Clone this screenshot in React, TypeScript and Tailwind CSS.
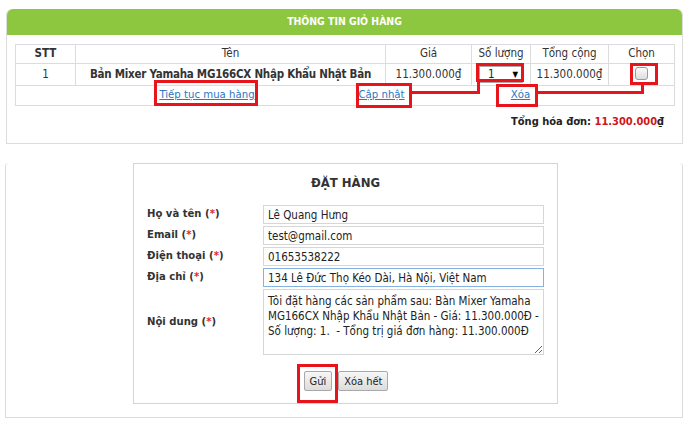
import { type ReactNode } from "react";

const fields = [
  { label: "Họ và tên", value: "Lê Quang Hưng" },
  { label: "Email", value: "test@gmail.com" },
  { label: "Điện thoại", value: "01653538222" },
  { label: "Địa chỉ", value: "134 Lê Đức Thọ Kéo Dài, Hà Nội, Việt Nam", focused: true },
];

const message =
  "Tôi đặt hàng các sản phẩm sau: Bàn Mixer Yamaha\nMG166CX Nhập Khẩu Nhật Bản - Giá: 11.300.000Đ -\nSố lượng: 1.  - Tổng trị giá đơn hàng: 11.300.000Đ";

function Label({ children }: { children: ReactNode }) {
  return (
    <span className="text-[11.2px] font-bold text-[#333]">
      {children} (<span className="text-[#e3262d]">*</span>)
    </span>
  );
}

function Th({ children, bold }: { children: ReactNode; bold?: boolean }) {
  return (
    <th
      className={`border border-[#dcdcdc] text-center text-[11.5px] text-[#333] ${
        bold ? "font-bold" : "font-normal"
      }`}
    >
      {children}
    </th>
  );
}

function Td({ children, className = "" }: { children: ReactNode; className?: string }) {
  return (
    <td className={`border border-[#dcdcdc] text-center text-[11.5px] text-[#333] ${className}`}>
      {children}
    </td>
  );
}

function Mark({ className }: { className: string }) {
  return <div className={`pointer-events-none absolute border-[3px] border-[#e8141b] ${className}`} />;
}

function Line({ className }: { className: string }) {
  return <div className={`pointer-events-none absolute bg-[#e8141b] ${className}`} />;
}

function Button({ children }: { children: ReactNode }) {
  return (
    <button
      type="button"
      className="h-[20px] rounded-[2px] border border-[#a9a9a9] bg-gradient-to-b from-[#f7f7f7] to-[#dcdcdc] px-[5px] text-[11px] leading-none text-[#222]"
    >
      {children}
    </button>
  );
}

export default function App() {
  return (
    <div className="relative h-[441px] w-[690px] overflow-hidden bg-white pt-[9px] font-['DejaVu_Sans_Condensed','DejaVu_Sans',sans-serif] text-[11.5px] text-[#333]">
      {/* cart panel */}
      <div className="ml-[6px] h-[135px] w-[677px] rounded-t-[6px] border border-t-0 border-[#dcdcdc]">
        <div className="flex h-[26px] items-center justify-center rounded-t-[6px] bg-[#8dc63f] text-[10.4px] font-bold text-white">
          THÔNG TIN GIỎ HÀNG
        </div>
        <div className="px-[8px] pt-[9px]">
          <table className="w-[659px] table-fixed border-collapse">
            <colgroup>
              <col className="w-[60px]" />
              <col className="w-[310px]" />
              <col className="w-[86px]" />
              <col className="w-[59px]" />
              <col className="w-[78px]" />
              <col className="w-[66px]" />
            </colgroup>
            <thead>
              <tr className="h-[19px]">
                <Th bold>STT</Th>
                <Th>Tên</Th>
                <Th>Giá</Th>
                <Th>Số lượng</Th>
                <Th>Tổng cộng</Th>
                <Th>Chọn</Th>
              </tr>
            </thead>
            <tbody>
              <tr className="h-[21px]">
                <Td>1</Td>
                <Td className="text-[10px] font-bold tracking-[-0.25px]">
                  Bản Mixer Yamaha MG166CX Nhập Khẩu Nhật Bản
                </Td>
                <Td>11.300.000₫</Td>
                <Td>
                  <div className="relative mx-auto h-[17px] w-[44px]">
                    <select className="h-full w-full appearance-none border border-[#a9a9a9] bg-white pl-[8px] text-[11.5px] leading-none text-[#222] outline-none">
                      <option>1</option>
                    </select>
                    <span className="pointer-events-none absolute right-[5px] top-[3px] text-[8px] text-black">▼</span>
                  </div>
                </Td>
                <Td>11.300.000₫</Td>
                <Td>
                  <input
                    type="checkbox"
                    className="mt-[3px] h-[13px] w-[13px] appearance-none rounded-[3px] border border-[#9a9a9a] bg-gradient-to-b from-[#fbfbfb] to-[#dedede]"
                  />
                </Td>
              </tr>
              <tr className="h-[20px]">
                <td colSpan={6} className="border border-[#dcdcdc] text-[11.3px]">
                  <div className="flex">
                    <span className="ml-[135px] w-[112px] text-center">
                      <a href="#" className="text-[#2a78c2] underline">Tiếp tục mua hàng</a>
                    </span>
                    <span className="ml-[78px] w-[81px] text-center">
                      <a href="#" className="text-[#2a78c2] underline">Cập nhật</a>
                    </span>
                    <span className="ml-[69px] w-[59px] text-center">
                      <a href="#" className="text-[#2a78c2] underline">Xóa</a>
                    </span>
                  </div>
                </td>
              </tr>
            </tbody>
          </table>
          <div className="mt-[8px] pr-[10px] text-right text-[11px] font-bold text-[#222]">
            Tổng hóa đơn: <span className="text-[#d0161b]">11.300.000</span>
            <span className="text-[#222]">₫</span>
          </div>
        </div>
      </div>

      {/* order panel */}
      <div className="ml-[5px] mt-[19px] h-[255px] w-[678px] rounded-t-[4px] border border-t-0 border-[#dcdcdc] pb-[14px]">
        <div className="ml-[127px] h-[241px] w-[425px] border border-[#d4d4d4] px-[13px]">
          <h2 className="pb-[13px] pt-[10px] text-center text-[13px] font-bold leading-[18px] text-[#333]">
            ĐẶT HÀNG
          </h2>
          <div className="grid grid-cols-[116px_281px] gap-y-[2px]">
            {fields.map((f) => (
              <div key={f.label} className="contents">
                <div className="flex h-[19px] items-center">
                  <Label>{f.label}</Label>
                </div>
                <input
                  readOnly
                  value={f.value}
                  className={`h-[19px] w-full border px-[4px] text-[11.5px] text-[#222] outline-none ${
                    f.focused ? "border-[#86b1e3]" : "border-[#d6d6d6]"
                  }`}
                />
              </div>
            ))}
            <div className="flex items-center">
              <Label>Nội dung</Label>
            </div>
            <textarea
              readOnly
              value={message}
              wrap="off"
              className="h-[66px] w-full overflow-hidden border border-[#d6d6d6] px-[4px] pt-[4px] text-[11.5px] leading-[15px] text-[#222] outline-none"
            />
          </div>
          <div className="mt-[16px] flex justify-center gap-[6px] pl-[1px]">
            <Button>Gửi</Button>
            <Button>Xóa hết</Button>
          </div>
        </div>
      </div>

      {/* red annotations */}
      <Mark className="left-[154px] top-[80px] h-[26px] w-[104px]" />
      <Mark className="left-[356px] top-[83px] h-[25px] w-[56px]" />
      <Mark className="left-[476px] top-[63px] h-[19px] w-[48px]" />
      <Mark className="left-[496px] top-[84px] h-[23px] w-[42px]" />
      <Mark className="left-[630px] top-[63px] h-[22px] w-[28px]" />
      <Line className="left-[477px] top-[81px] h-[13px] w-[3px]" />
      <Line className="left-[411px] top-[91px] h-[3px] w-[69px]" />
      <Line className="left-[641px] top-[84px] h-[10px] w-[3px]" />
      <Line className="left-[537px] top-[91px] h-[3px] w-[107px]" />
      <Mark className="left-[297px] top-[364px] h-[39px] w-[41px]" />
    </div>
  );
}
